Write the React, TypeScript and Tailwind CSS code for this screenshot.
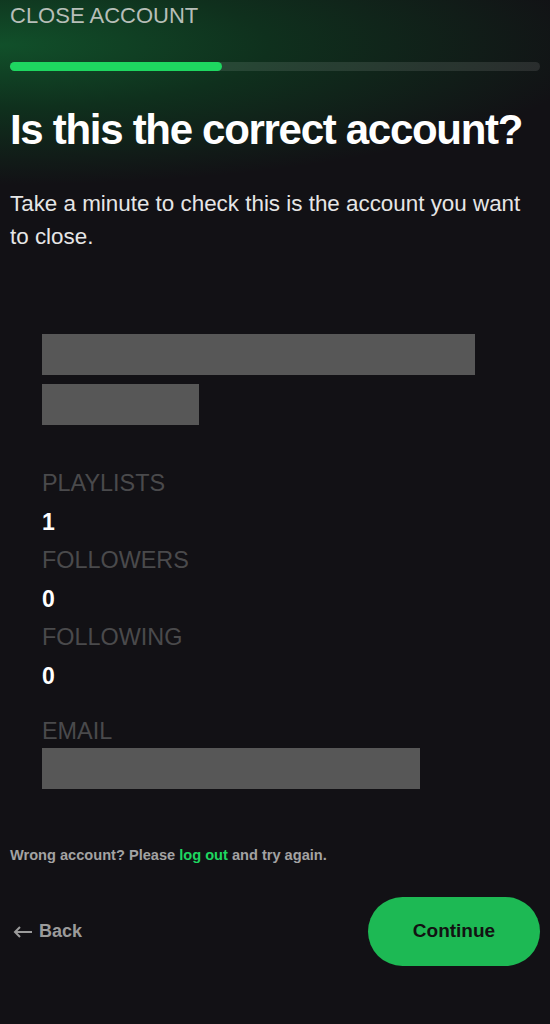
const stats = [
  { label: "PLAYLISTS", value: "1" },
  { label: "FOLLOWERS", value: "0" },
  { label: "FOLLOWING", value: "0" },
];

function Redacted({ className }: { className: string }) {
  return <div className={`bg-[#575757] ${className}`} />;
}

export default function App() {
  return (
    <div className="min-h-screen flex flex-col px-[10px] bg-[#121115] bg-[radial-gradient(ellipse_600px_140px_at_0px_45px,#11502a_0%,#0f301d_45%,transparent_100%)] font-['Liberation_Sans',Arial,sans-serif]">
      <div className="pt-[3px] text-[22px] leading-[26px] text-[#b7beb8]">CLOSE ACCOUNT</div>

      <div className="mt-[33px] h-[9px] w-full rounded-full bg-white/10">
        <div className="h-full w-[40%] rounded-full bg-[#1ed760]" />
      </div>

      <h1 className="mt-[34px] text-[42px] leading-[50px] font-bold tracking-[-1.3px] text-white">
        Is this the correct account?
      </h1>

      <p className="mt-[32px] text-[22.4px] leading-[33px] text-[#e6e6e6]">
        Take a minute to check this is the account you want
        <br />
        to close.
      </p>

      <div className="pl-[32px] flex flex-col">
        <Redacted className="mt-[81px] h-[41px] w-[433px]" />
        <Redacted className="mt-[9px] h-[41px] w-[157px]" />

        <div className="mt-[44px] flex flex-col gap-[10px]">
          {stats.map((s) => (
            <div key={s.label} className="flex flex-col gap-[11px]">
              <span className="text-[23.4px] leading-[28px] text-[#4a4a4c]">{s.label}</span>
              <span className="text-[23px] leading-[28px] font-bold text-white">{s.value}</span>
            </div>
          ))}
        </div>

        <span className="mt-[27px] text-[23.4px] leading-[28px] text-[#4a4a4c]">EMAIL</span>
        <Redacted className="mt-[3px] h-[41px] w-[378px]" />
      </div>

      <p className="mt-[56px] text-[14.6px] leading-[20px] font-bold text-[#a3a3a3]">
        Wrong account? Please <span className="text-[#1ed760]">log out</span> and try again.
      </p>

      <div className="mt-[32px] flex items-center justify-between">
        <button className="pl-[3px] flex items-center gap-[7px] text-[18px] font-bold text-[#9b9b9b]">
          <svg width="19" height="12" viewBox="0 0 19 12" fill="none" stroke="currentColor" strokeWidth="2">
            <path d="M19 6H2" />
            <path d="M7 1L2 6l5 5" />
          </svg>
          <span>Back</span>
        </button>
        <button className="h-[69px] w-[172px] rounded-full bg-[#1db954] text-[19px] font-bold text-[#121212]">
          Continue
        </button>
      </div>
    </div>
  );
}
